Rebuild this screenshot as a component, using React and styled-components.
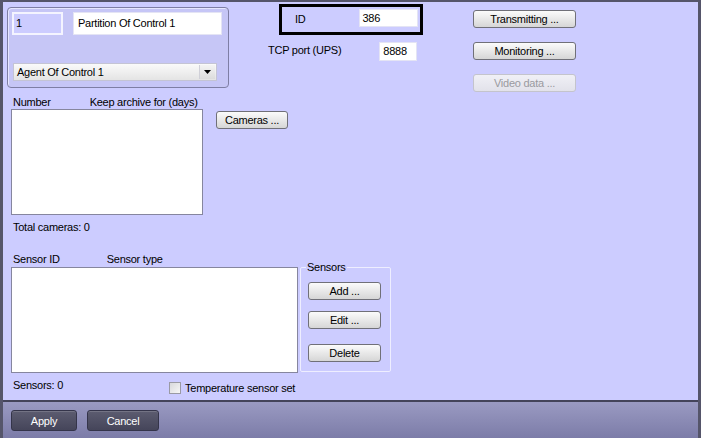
import React from "react";
import styled, { createGlobalStyle } from "styled-components";

const Global = createGlobalStyle`
  html, body { margin: 0; padding: 0; background: #ccccff; }
  body {
    font-family: "Liberation Sans", Arial, sans-serif;
    font-size: 11px;
    letter-spacing: -0.25px;
    color: #000;
  }
`;

// ----- Frame -----
const Frame = styled.div`
  width: 701px;
  height: 438px;
  box-sizing: border-box;
  border-top: 2px solid #55556a;
  border-left: 3px solid #55556a;
  border-right: 3px solid #55556a;
  display: flex;
  flex-direction: column;
  overflow: hidden;
`;

const Main = styled.div`
  height: 398px;
  background: #ccccff;
  display: flex;
  flex-direction: column;
`;

const Separator = styled.div`
  height: 2px;
  background: #44445a;
`;

const BottomBar = styled.div`
  flex: 1;
  background: linear-gradient(#9a9ac2, #7c7ca8);
  display: flex;
  gap: 10px;
  padding: 8px 0 0 8px;
`;

const DarkButton = styled.button`
  width: ${p => p.w}px;
  height: 21px;
  box-sizing: border-box;
  border: 1px solid #34344a;
  border-radius: 3px;
  background: linear-gradient(#5c5c70, #45455a);
  color: #fff;
  font: inherit;
  letter-spacing: inherit;
  padding: 0;
  box-shadow: inset 0 1px 0 rgba(255,255,255,0.15);
`;

// ----- Top row -----
const TopRow = styled.div`
  display: flex;
  align-items: flex-start;
  height: 94px;
`;

const GroupBox = styled.div`
  margin: 5px 0 0 4px;
  width: 222px;
  height: 81px;
  box-sizing: border-box;
  border: 1px solid #7e7ea4;
  border-radius: 4px;
  background: #c6c6f6;
  box-shadow: 1px 1px 0 #e6e6ff inset;
  padding: 4px 6px 0 4px;
  display: flex;
  flex-direction: column;
`;

const FieldRow = styled.div`
  display: flex;
  gap: 10px;
`;

const TextField = styled.div`
  width: ${p => p.w}px;
  height: ${p => p.h || 23}px;
  box-sizing: border-box;
  background: ${p => (p.tinted ? "#ccccff" : "#fff")};
  border: ${p => (p.tinted ? "2px solid #f4f4ff" : "1px solid #e4e4f4")};
  padding: ${p => (p.tinted ? "3px 2px" : p.h ? "2px 3px" : "4px 4px")};
  margin-left: ${p => p.ml || 0}px;
  line-height: 13px;
  white-space: nowrap;
`;

const Select = styled.div`
  margin: 28px 0 0 1px;
  width: 204px;
  height: 18px;
  box-sizing: border-box;
  border: 1px solid #c4c4d4;
  background: linear-gradient(#fafafa, #e4e4e4);
  display: flex;
  align-items: center;
  padding-left: 3px;
`;

const SelectText = styled.span`
  flex: 1;
  line-height: 13px;
`;

const SelectArrow = styled.div`
  width: 15px;
  height: 14px;
  margin-right: 1px;
  border-left: 1px solid #d0d0d8;
  background: linear-gradient(#f4f4f4, #dcdcdc);
  display: flex;
  align-items: center;
  justify-content: center;
`;

const MiddleCol = styled.div`
  margin-left: 39px;
  margin-top: 2px;
  width: 155px;
  display: flex;
  flex-direction: column;
`;

const IdBox = styled.div`
  margin-left: 11px;
  width: 144px;
  height: 31px;
  box-sizing: border-box;
  border: 3px solid #000;
  display: flex;
  align-items: flex-start;
  padding: 2px 0 0 13px;
`;

const Label = styled.span`
  line-height: 13px;
  white-space: nowrap;
  margin: ${p => p.m || "0"};
`;

const TcpRow = styled.div`
  margin-top: 7px;
  display: flex;
  align-items: flex-start;
`;

const RightCol = styled.div`
  margin-left: 50px;
  margin-top: 8px;
  display: flex;
  flex-direction: column;
  gap: 14px;
`;

const Button = styled.button`
  width: ${p => p.w}px;
  height: 18px;
  box-sizing: border-box;
  padding: 0;
  border: 1px solid ${p => (p.disabled ? "#c4c4cc" : "#707078")};
  border-radius: 3px;
  background: ${p =>
    p.disabled ? "linear-gradient(#f0f0f6, #e2e2ea)" : "linear-gradient(#fbfbfb, #d6d6d6)"};
  color: ${p => (p.disabled ? "#9a9aa0" : "#000")};
  font: inherit;
  letter-spacing: inherit;
  line-height: 14px;
`;

// ----- Lists -----
const Header = styled.div`
  display: flex;
  height: 13px;
  padding-left: 10px;
  margin-top: ${p => p.mt || 0}px;
`;

const ListRow = styled.div`
  display: flex;
  align-items: flex-start;
  margin-left: 8px;
  margin-top: ${p => p.mt || 0}px;
`;

const ListBox = styled.div`
  width: ${p => p.w}px;
  height: 106px;
  box-sizing: border-box;
  background: #fff;
  border: 1px solid #86869e;
`;

const Caption = styled.div`
  line-height: 13px;
  padding-left: 10px;
  margin-top: ${p => p.mt}px;
`;

const SensorGroup = styled.fieldset`
  margin: -5px 0 0 2px;
  width: 91px;
  height: 110px;
  box-sizing: border-box;
  border: 1px solid #eeeeff;
  border-radius: 2px;
  padding: 0 0 0 7px;
  display: flex;
  flex-direction: column;
  gap: 11px;
`;

const Legend = styled.legend`
  padding: 0 1px;
  margin-left: -2px;
  line-height: 11px;
`;

const FooterRow = styled.div`
  display: flex;
  align-items: flex-start;
  margin-top: 6px;
  padding-left: 10px;
`;

const Checkbox = styled.div`
  width: 12px;
  height: 12px;
  box-sizing: border-box;
  margin: 3px 4px 0 106px;
  border: 1px solid #9a9aa4;
  background: linear-gradient(135deg, #d8d8dc, #f6f6f6);
`;

export default function App() {
  return (
    <>
      <Global />
      <Frame>
        <Main>
          <TopRow>
            <GroupBox>
              <FieldRow>
                <TextField w={51} tinted>1</TextField>
                <TextField w={149}>Partition Of Control 1</TextField>
              </FieldRow>
              <Select>
                <SelectText>Agent Of Control 1</SelectText>
                <SelectArrow>
                  <svg width="7" height="4" viewBox="0 0 7 4">
                    <path d="M0 0h7L3.5 4z" fill="#000" />
                  </svg>
                </SelectArrow>
              </Select>
            </GroupBox>

            <MiddleCol>
              <IdBox>
                <Label m="4px 0 0 0">ID</Label>
                <TextField w={59} h={18} ml={53}>386</TextField>
              </IdBox>
              <TcpRow>
                <Label m="2px 0 0 0">TCP port (UPS)</Label>
                <TextField w={38} h={19} ml={38}>8888</TextField>
              </TcpRow>
            </MiddleCol>

            <RightCol>
              <Button w={103}>Transmitting ...</Button>
              <Button w={103}>Monitoring ...</Button>
              <Button w={103} disabled>Video data ...</Button>
            </RightCol>
          </TopRow>

          <Header>
            <Label>Number</Label>
            <Label m="0 0 0 39px">Keep archive for (days)</Label>
          </Header>
          <ListRow>
            <ListBox w={192} />
            <Button w={72} style={{ marginLeft: 13, marginTop: 2 }}>Cameras ...</Button>
          </ListRow>
          <Caption mt={6}>Total cameras: 0</Caption>

          <Header mt={19}>
            <Label>Sensor ID</Label>
            <Label m="0 0 0 47px">Sensor type</Label>
          </Header>
          <ListRow mt={1}>
            <ListBox w={287} />
            <SensorGroup>
              <Legend>Sensors</Legend>
              <Button w={73} style={{ marginTop: 9 }}>Add ...</Button>
              <Button w={73}>Edit ...</Button>
              <Button w={73} style={{ marginTop: 4 }}>Delete</Button>
            </SensorGroup>
          </ListRow>
          <FooterRow>
            <Label>Sensors: 0</Label>
            <Checkbox />
            <Label m="3px 0 0 0">Temperature sensor set</Label>
          </FooterRow>
        </Main>
        <Separator />
        <BottomBar>
          <DarkButton w={66}>Apply</DarkButton>
          <DarkButton w={72}>Cancel</DarkButton>
        </BottomBar>
      </Frame>
    </>
  );
}
